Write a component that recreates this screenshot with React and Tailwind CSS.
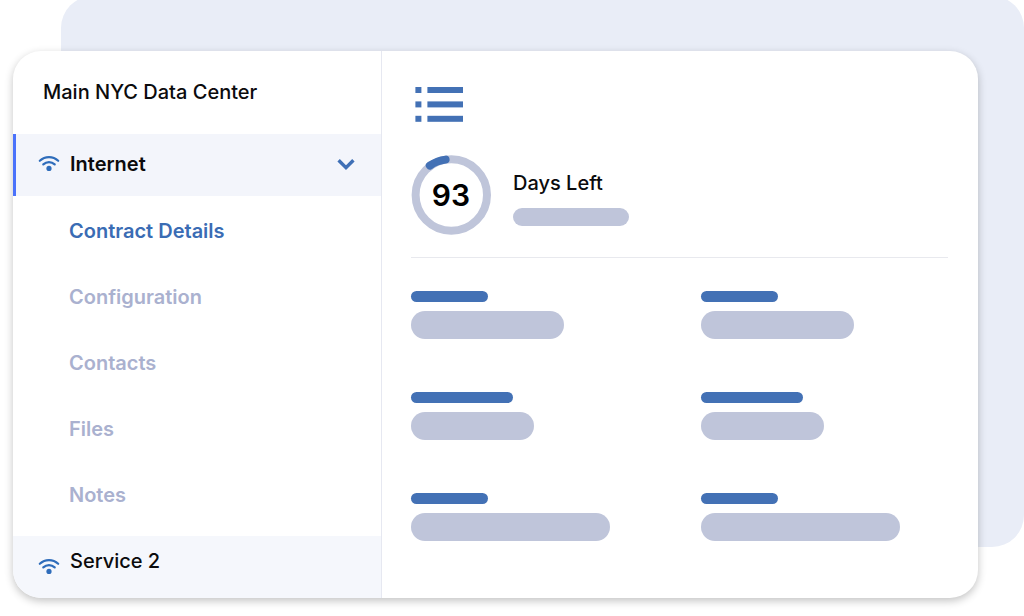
import { useState } from "react";
import clsx from "clsx";

const links = ["Contract Details", "Configuration", "Contacts", "Files", "Notes"];

const details = [
  { label: "w-[77px]", value: "w-[153px]" },
  { label: "w-[77px]", value: "w-[153px]" },
  { label: "w-[102px]", value: "w-[123px]" },
  { label: "w-[102px]", value: "w-[123px]" },
  { label: "w-[77px]", value: "w-[199px]" },
  { label: "w-[77px]", value: "w-[199px]" },
];

const WifiIcon = ({ className }) => (
  <svg viewBox="0 0 22 18" className={className} fill="none" aria-hidden="true">
    <path d="M1.8 5.8C7 0.9 15 0.9 20.2 5.8" stroke="#2f6dbb" strokeWidth="2.2" strokeLinecap="round" />
    <path d="M5.3 9.4C8.6 6.4 13.4 6.4 16.7 9.4" stroke="#2f6dbb" strokeWidth="2.2" strokeLinecap="round" />
    <circle cx="11" cy="13.4" r="2.6" fill="#2f6dbb" />
  </svg>
);

const ChevronIcon = () => (
  <svg viewBox="0 0 18 12" className="h-3 w-[18px]" fill="none" aria-hidden="true">
    <path d="M1.6 2.2L9 9.6L16.4 2.2" stroke="#3f70b6" strokeWidth="3.4" />
  </svg>
);

const ListIcon = () => (
  <svg viewBox="0 0 48 36" className="h-9 w-12" fill="#4371b5" aria-hidden="true">
    <rect x="0.4" y="0" width="6" height="6" />
    <rect x="12.4" y="0" width="35.6" height="6" />
    <rect x="0.4" y="14.4" width="6" height="6" />
    <rect x="12.4" y="14.4" width="35.6" height="6" />
    <rect x="0.4" y="28.8" width="6" height="6" />
    <rect x="12.4" y="28.8" width="35.6" height="6" />
  </svg>
);

const DaysRing = ({ days }) => (
  <div className="grid size-20 place-items-center">
    <svg viewBox="0 0 80 80" className="col-start-1 row-start-1 size-20" fill="none" aria-hidden="true">
      <circle cx="40.3" cy="40" r="35.7" stroke="#bfc5da" strokeWidth="8" />
      <path d="M18.8 10.6A36 36 0 0 1 34.6 4.6" stroke="#4371b5" strokeWidth="8" strokeLinecap="round" />
    </svg>
    <span className="col-start-1 row-start-1 text-[30px] leading-9 font-semibold text-black">{days}</span>
  </div>
);

const Sidebar = () => {
  const [open, setOpen] = useState(true);
  const [active, setActive] = useState("Contract Details");

  return (
    <aside className="flex w-[369px] shrink-0 flex-col border-r border-[#e6e8f1]">
      <h1 className="pt-[26px] pb-[27px] pl-[30px] text-[20px] leading-[30px] font-medium">Main NYC Data Center</h1>
      <button
        type="button"
        aria-expanded={open}
        onClick={() => setOpen(!open)}
        className="flex h-[62px] items-center border-l-[3px] border-[#4a72fb] bg-[#f3f5fb] pr-[26px] pb-0.5 pl-[22px] text-left text-[20px] font-semibold"
      >
        <WifiIcon className="h-[18px] w-[22px]" />
        <span className="ml-2.5 flex-1">Internet</span>
        <ChevronIcon />
      </button>
      {open && (
        <nav className="flex flex-col pt-0.5">
          {links.map((link) => (
            <a
              key={link}
              href="#"
              onClick={() => setActive(link)}
              className={clsx(
                "flex h-[66px] items-center pl-14 text-[20px] font-semibold",
                link === active ? "text-[#3a6cb4]" : "text-[#aab1cf]"
              )}
            >
              {link}
            </a>
          ))}
        </nav>
      )}
      <button
        type="button"
        className="mt-auto flex h-[62px] items-start bg-[#f5f7fc] pt-2.5 pl-[25px] text-left text-[20px] leading-[30px] font-medium"
      >
        <WifiIcon className="mt-3 h-[18px] w-[22px]" />
        <span className="ml-2.5">Service 2</span>
      </button>
    </aside>
  );
};

const ContractPanel = () => (
  <main className="flex-1 pt-9 pr-[30px] pl-[29px]">
    <div className="pl-1">
      <ListIcon />
    </div>
    <div className="mt-8 flex items-center gap-[22px] border-b border-[#e8e9ee] pb-[22px]">
      <DaysRing days={93} />
      <div className="pt-1">
        <h2 className="text-[20px] leading-[30px] font-medium">Days Left</h2>
        <div className="mt-2.5 h-[18px] w-[116px] rounded-full bg-[#bfc5da]" />
      </div>
    </div>
    <div className="mt-[33px] grid grid-cols-2 gap-x-[43px] gap-y-[53px]">
      {details.map((item, i) => (
        <div key={i}>
          <div className={clsx("h-[11px] rounded-full bg-[#4371b5]", item.label)} />
          <div className={clsx("mt-[9px] h-7 rounded-full bg-[#bfc5da]", item.value)} />
        </div>
      ))}
    </div>
  </main>
);

export default function App() {
  return (
    <div className="relative flex min-h-screen overflow-hidden bg-white pt-[51px] pr-[46px] pb-[18px] pl-[13px] font-['Inter',sans-serif] text-[#0b0b0d]">
      <div className="absolute -top-1 right-0 bottom-[69px] left-[61px] rounded-[32px] bg-[#e9edf7]" />
      <div className="relative flex flex-1 overflow-hidden rounded-[28px] bg-white shadow-[0_3px_8px_rgba(0,0,0,0.24)]">
        <Sidebar />
        <ContractPanel />
      </div>
    </div>
  );
}
